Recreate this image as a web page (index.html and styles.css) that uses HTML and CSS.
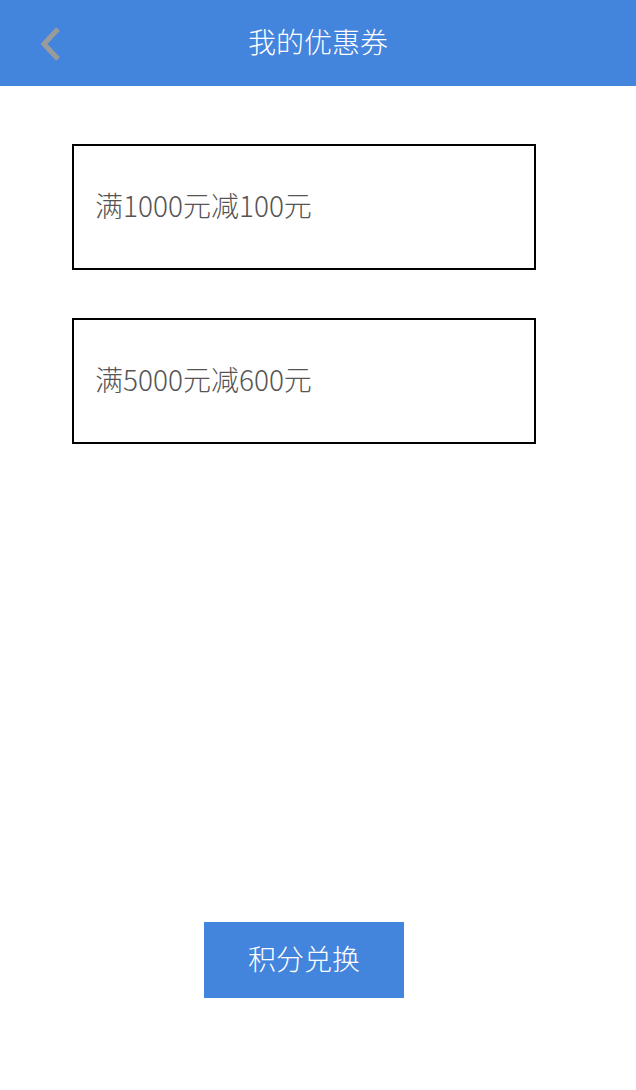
FILE: index.html
```html
<!DOCTYPE html>
<html lang="zh">
<head>
<meta charset="utf-8">
<link rel="stylesheet" href="styles.css">
</head>
<body>
<header class="topbar">
  <a class="back" href="#" aria-label="返回">
    <svg width="24" height="36" viewBox="0 0 24 36"><polyline points="19,3 5,18 19,33" fill="none" stroke="#9b9b9b" stroke-width="5"/></svg>
  </a>
  <h1 class="title">我的优惠券</h1>
</header>
<main class="content">
  <div class="coupons">
    <div class="coupon">满1000元减100元</div>
    <div class="coupon">满5000元减600元</div>
  </div>
  <button class="exchange">积分兑换</button>
</main>
</body>
</html>
```
FILE: styles.css
```css
* { box-sizing: border-box; }
html, body { margin: 0; padding: 0; background: #fff; }
body {
  width: 636px;
  height: 1090px;
  font-family: "Noto Sans CJK SC", "Noto Sans", sans-serif;
}
.topbar {
  height: 86px;
  background: #4384dd;
  display: flex;
  align-items: center;
  justify-content: center;
  position: relative;
  padding-bottom: 5px;
}
.back {
  position: absolute;
  left: 39px;
  top: 26px;
  display: block;
  line-height: 0;
}
.title {
  margin: 0;
  color: #fff;
  font-size: 28px;
  font-weight: 300;
  line-height: 40px;
}
.content {
  padding: 58px 0 0 72px;
  display: flex;
  flex-direction: column;
}
.coupons {
  display: flex;
  flex-direction: column;
  gap: 48px;
}
.coupon {
  width: 464px;
  height: 126px;
  border: 2px solid #000;
  display: flex;
  align-items: center;
  padding-left: 21px;
  padding-bottom: 4px;
  font-size: 28px;
  font-weight: 300;
  line-height: 40px;
  color: #555;
}
.exchange {
  margin: 478px 0 0 132px;
  width: 200px;
  height: 76px;
  border: none;
  background: #4384dd;
  color: #fff;
  font-family: inherit;
  font-size: 28px;
  font-weight: 300;
  line-height: 40px;
  padding: 0 0 4px 0;
}
```
